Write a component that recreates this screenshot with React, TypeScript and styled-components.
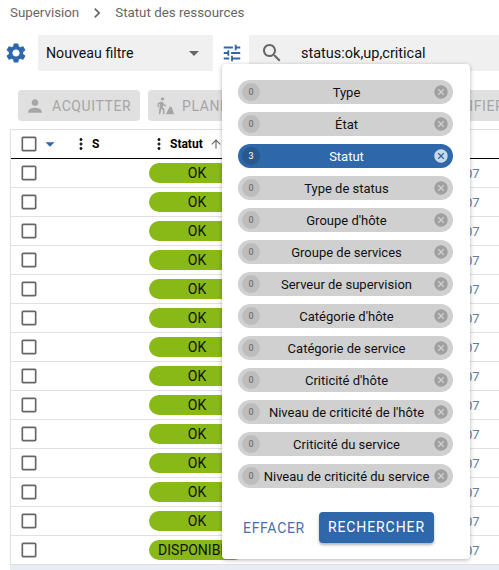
import React from 'react';
import styled, { createGlobalStyle } from 'styled-components';

const paths = {
	settings: 'M19.14 12.94c.04-.3.06-.61.06-.94 0-.32-.02-.64-.07-.94l2.03-1.58c.18-.14.23-.41.12-.61l-1.92-3.32c-.12-.22-.37-.29-.59-.22l-2.39.96c-.5-.38-1.03-.7-1.62-.94l-.36-2.54c-.04-.24-.24-.41-.48-.41h-3.84c-.24 0-.43.17-.47.41l-.36 2.54c-.59.24-1.13.57-1.62.94l-2.39-.96c-.22-.08-.47 0-.59.22L2.74 8.87c-.12.21-.08.47.12.61l2.03 1.58c-.05.3-.09.63-.09.94s.02.64.07.94l-2.03 1.58c-.18.14-.23.41-.12.61l1.92 3.32c.12.22.37.29.59.22l2.39-.96c.5.38 1.03.7 1.62.94l.36 2.54c.05.24.24.41.48.41h3.84c.24 0 .44-.17.47-.41l.36-2.54c.59-.24 1.13-.56 1.62-.94l2.39.96c.22.08.47 0 .59-.22l1.92-3.32c.12-.22.07-.47-.12-.61l-2.01-1.58zM12 15.6c-1.98 0-3.6-1.62-3.6-3.6s1.62-3.6 3.6-3.6 3.6 1.62 3.6 3.6-1.62 3.6-3.6 3.6z',
	tune: 'M3 17v2h6v-2H3zM3 5v2h10V5H3zm10 16v-2h8v-2h-8v-2h-2v6h2zM7 9v2H3v2h4v2h2V9H7zm14 4v-2H11v2h10zm-6-4h2V7h4V5h-4V3h-2v6z',
	search: 'M15.5 14h-.79l-.28-.27C15.41 12.59 16 11.11 16 9.5 16 5.91 13.09 3 9.5 3S3 5.91 3 9.5 5.91 16 9.5 16c1.61 0 3.09-.59 4.23-1.57l.27.28v.79l5 4.99L20.49 19l-4.99-5zm-6 0C7.01 14 5 11.99 5 9.5S7.01 5 9.5 5 14 7.01 14 9.5 11.99 14 9.5 14z',
	person: 'M12 12c2.21 0 4-1.79 4-4s-1.79-4-4-4-4 1.79-4 4 1.79 4 4 4zm0 2c-2.67 0-8 1.34-8 4v2h16v-2c0-2.66-5.33-4-8-4z',
	cancel: 'M12 2C6.47 2 2 6.47 2 12s4.47 10 10 10 10-4.47 10-10S17.53 2 12 2zm5 13.59L15.59 17 12 13.41 8.41 17 7 15.59 10.59 12 7 8.41 8.41 7 12 10.59 15.59 7 17 8.41 13.41 12 17 15.59z',
	arrowUp: 'M4 12l1.41 1.41L11 7.83V20h2V7.83l5.58 5.59L20 12l-8-8-8 8z',
	moreVert: 'M12 8c1.1 0 2-.9 2-2s-.9-2-2-2-2 .9-2 2 .9 2 2 2zm0 2c-1.1 0-2 .9-2 2s.9 2 2 2 2-.9 2-2-.9-2-2-2zm0 6c-1.1 0-2 .9-2 2s.9 2 2 2 2-.9 2-2-.9-2-2-2z',
	checkbox: 'M19 5v14H5V5h14m0-2H5c-1.1 0-2 .9-2 2v14c0 1.1.9 2 2 2h14c1.1 0 2-.9 2-2V5c0-1.1-.9-2-2-2z',
	chevron: 'M10 6L8.59 7.41 13.17 12l-4.58 4.59L10 18l6-6z',
	caret: 'M7 10l5 5 5-5z',
	worker: 'M9 5.5c1.1 0 2-.9 2-2s-.9-2-2-2-2 .9-2 2 .9 2 2 2zM6.5 7L3 9v4.5h1.6v-3.4l1.4-.7L4.5 22h1.9l1.3-7 1.8 1.9V22h1.8v-6.5l-1.9-2 .5-2.6c.8 1 2 1.6 3.3 1.6v-1.7c-1.1 0-2-.6-2.5-1.4l-.9-1.5C9 7.3 8.4 7 7.8 7h-1.3zM17.5 13L13 22h10l-3-9h-2.5z'
};

const GlobalStyle = createGlobalStyle`
	html, body {
		margin: 0;
		overflow: hidden;
		background: #fff;
		font-family: Roboto, "Liberation Sans", sans-serif;
	}
`;

const Page = styled.div`
	position: relative;
	width: 499px;
	height: 570px;
	overflow: hidden;
`;

const Breadcrumb = styled.nav`
	display: flex;
	align-items: center;
	height: 25px;
	padding-left: 10px;
	font-size: 13.33px;
	color: #666;
`;

const Crumb = styled.span``;

const CrumbSeparator = styled.svg`
	width: 20px;
	height: 20px;
	margin: 0 8px;
	fill: #666;
`;

const FilterBar = styled.div`
	display: flex;
	align-items: center;
	height: 36px;
	margin-top: 10px;
	padding-left: 4px;
`;

const GearIcon = styled.svg`
	width: 24px;
	height: 24px;
	margin-right: 10px;
	fill: #2e68aa;
	flex: none;
`;

const FilterSelect = styled.div`
	display: flex;
	align-items: center;
	justify-content: space-between;
	width: 175px;
	height: 36px;
	padding: 0 7px 0 8px;
	box-sizing: border-box;
	background: #f0f0f0;
	font-size: 14.2px;
	color: #111;
	flex: none;
`;

const CaretIcon = styled.svg`
	width: 24px;
	height: 24px;
	fill: #666;
`;

const TuneIcon = styled.svg`
	width: 22px;
	height: 22px;
	margin: 0 4px 0 8px;
	fill: #2e68aa;
	flex: none;
`;

const SearchBox = styled.div`
	display: flex;
	align-items: center;
	width: 260px;
	height: 36px;
	margin-left: 2px;
	padding-left: 11px;
	box-sizing: border-box;
	background: #f0f0f0;
	font-size: 14.5px;
	color: #111;
	flex: none;
`;

const SearchIcon = styled.svg`
	width: 24px;
	height: 24px;
	margin-right: 17px;
	fill: #666;
	flex: none;
`;

const ActionBar = styled.div`
	display: flex;
	gap: 8px;
	height: 31px;
	margin-top: 19px;
	padding-left: 18px;
`;

const ActionButton = styled.div<{ $width: number; $inset?: number }>`
	display: flex;
	align-items: center;
	gap: 7px;
	width: ${(p) => p.$width}px;
	height: 31px;
	padding-left: ${(p) => p.$inset ?? 7}px;
	box-sizing: border-box;
	border-radius: 4px;
	background: #e0e0e0;
	color: #a6a6a6;
	font-size: 14px;
	letter-spacing: 0.6px;
	white-space: nowrap;
	overflow: hidden;
	flex: none;
`;

const ActionIcon = styled.svg`
	width: 20px;
	height: 20px;
	fill: #a6a6a6;
	flex: none;
`;

const Table = styled.div`
	width: 520px;
	margin: 8px 0 0 10px;
	border-left: 1px solid #e0e0e0;
	border-top: 1px solid #e0e0e0;
`;

const HeaderRow = styled.div`
	display: grid;
	grid-template-columns: 68px 78px 1fr;
	align-items: center;
	height: 28px;
	border-bottom: 1px solid #000;
	font-size: 12px;
	font-weight: 700;
	color: #000;
`;

const BodyRow = styled.div`
	display: grid;
	grid-template-columns: 138px 96px 1fr;
	align-items: center;
	height: 28px;
	border-bottom: 1px solid #e0e0e0;
`;

const SelectCell = styled.div`
	display: flex;
	align-items: center;
	padding-left: 8px;
`;

const HeaderCell = styled.div`
	display: flex;
	align-items: center;
`;

const CheckIcon = styled.svg`
	width: 20px;
	height: 20px;
	fill: #666;
	flex: none;
`;

const SortCaret = styled.svg`
	width: 22px;
	height: 22px;
	fill: #2e68aa;
`;

const DotsIcon = styled.svg`
	width: 18px;
	height: 18px;
	margin-left: -7px;
	margin-right: 2px;
	fill: #222;
	flex: none;
`;

const SortArrow = styled.svg`
	width: 14px;
	height: 14px;
	margin-left: 6px;
	fill: #666;
`;

const StatusPill = styled.div`
	height: 20px;
	line-height: 20px;
	border-radius: 10px;
	background: #88b917;
	color: #111;
	font-size: 14px;
	text-align: center;
	white-space: nowrap;
	overflow: hidden;
`;

const DateCell = styled.div`
	padding-left: 220px;
	font-size: 13px;
	color: #607d9b;
`;

const BottomBand = styled.div`
	height: 6px;
	margin-left: 10px;
	background: #e8edf4;
`;

const Popover = styled.div`
	position: absolute;
	left: 222px;
	top: 64px;
	width: 248px;
	height: 495px;
	padding: 16px;
	box-sizing: border-box;
	display: flex;
	flex-direction: column;
	background: #fff;
	border-radius: 4px;
	box-shadow: 0 1px 4px rgba(0, 0, 0, 0.3);
`;

const ChipList = styled.div`
	display: flex;
	flex-direction: column;
	gap: 8px;
	width: 215px;
`;

const Chip = styled.div<{ $active?: boolean }>`
	display: flex;
	align-items: center;
	height: 24px;
	padding: 0 4px;
	box-sizing: border-box;
	border-radius: 12px;
	background: ${(p) => (p.$active ? '#2e68aa' : '#d0d0d0')};
	color: ${(p) => (p.$active ? '#fff' : '#111')};
	font-size: 13px;
`;

const ChipCount = styled.span<{ $active?: boolean }>`
	display: flex;
	align-items: center;
	justify-content: center;
	width: 18px;
	height: 18px;
	border-radius: 50%;
	background: ${(p) => (p.$active ? '#27598f' : '#bdbdbd')};
	color: ${(p) => (p.$active ? '#fff' : '#616161')};
	font-size: 9px;
	flex: none;
`;

const ChipLabel = styled.span`
	flex: 1;
	text-align: center;
	white-space: nowrap;
`;

const ChipClose = styled.svg<{ $active?: boolean }>`
	width: 16px;
	height: 16px;
	fill: ${(p) => (p.$active ? 'rgba(255, 255, 255, 0.75)' : '#a0a0a0')};
	flex: none;
`;

const PopoverActions = styled.div`
	display: flex;
	align-items: center;
	gap: 14px;
	margin-top: 24px;
	padding-left: 5px;
	font-size: 14px;
	letter-spacing: 0.7px;
`;

const ClearButton = styled.span`
	color: #4a6fa8;
`;

const SubmitButton = styled.div`
	width: 115px;
	height: 31px;
	line-height: 31px;
	text-align: center;
	border-radius: 4px;
	background: #2e68aa;
	color: #fff;
	letter-spacing: 0.9px;
	box-shadow: 0 2px 3px rgba(0, 0, 0, 0.3);
`;

const criteria = [
	'Type',
	'État',
	'Statut',
	'Type de status',
	"Groupe d'hôte",
	'Groupe de services',
	'Serveur de supervision',
	"Catégorie d'hôte",
	'Catégorie de service',
	"Criticité d'hôte",
	"Niveau de criticité de l'hôte",
	'Criticité du service',
	'Niveau de criticité du service'
];

const rows = [...Array(13).fill('OK'), 'DISPONIBLE'];

const App = () => (
	<Page>
		<GlobalStyle />
		<Breadcrumb>
			<Crumb>Supervision</Crumb>
			<CrumbSeparator viewBox='0 0 24 24'><path d={paths.chevron} /></CrumbSeparator>
			<Crumb>Statut des ressources</Crumb>
		</Breadcrumb>
		<FilterBar>
			<GearIcon viewBox='0 0 24 24'><path d={paths.settings} /></GearIcon>
			<FilterSelect>
				Nouveau filtre
				<CaretIcon viewBox='0 0 24 24'><path d={paths.caret} /></CaretIcon>
			</FilterSelect>
			<TuneIcon viewBox='0 0 24 24'><path d={paths.tune} /></TuneIcon>
			<SearchBox>
				<SearchIcon viewBox='0 0 24 24'><path d={paths.search} /></SearchIcon>
				status:ok,up,critical
			</SearchBox>
		</FilterBar>
		<ActionBar>
			<ActionButton $width={122}>
				<ActionIcon viewBox='0 0 24 24'><path d={paths.person} /></ActionIcon>
				ACQUITTER
			</ActionButton>
			<ActionButton $width={130}>
				<ActionIcon viewBox='0 0 24 24'><path d={paths.worker} /></ActionIcon>
				PLANIFIER
			</ActionButton>
			<ActionButton $width={240} $inset={156}>VÉRIFIER</ActionButton>
		</ActionBar>
		<Table>
			<HeaderRow>
				<SelectCell>
					<CheckIcon viewBox='0 0 24 24'><path d={paths.checkbox} /></CheckIcon>
					<SortCaret viewBox='0 0 24 24'><path d={paths.caret} /></SortCaret>
				</SelectCell>
				<HeaderCell>
					<DotsIcon viewBox='0 0 24 24'><path d={paths.moreVert} /></DotsIcon>
					S
				</HeaderCell>
				<HeaderCell>
					<DotsIcon viewBox='0 0 24 24'><path d={paths.moreVert} /></DotsIcon>
					Statut
					<SortArrow viewBox='0 0 24 24'><path d={paths.arrowUp} /></SortArrow>
				</HeaderCell>
			</HeaderRow>
			{rows.map((status, i) => (
				<BodyRow key={i}>
					<SelectCell>
						<CheckIcon viewBox='0 0 24 24'><path d={paths.checkbox} /></CheckIcon>
					</SelectCell>
					<StatusPill>{status}</StatusPill>
					<DateCell>07</DateCell>
				</BodyRow>
			))}
		</Table>
		<BottomBand />
		<Popover>
			<ChipList>
				{criteria.map((label) => {
					const active = label === 'Statut';
					return (
						<Chip key={label} $active={active}>
							<ChipCount $active={active}>{active ? 3 : 0}</ChipCount>
							<ChipLabel>{label}</ChipLabel>
							<ChipClose $active={active} viewBox='0 0 24 24'><path d={paths.cancel} /></ChipClose>
						</Chip>
					);
				})}
			</ChipList>
			<PopoverActions>
				<ClearButton>EFFACER</ClearButton>
				<SubmitButton>RECHERCHER</SubmitButton>
			</PopoverActions>
		</Popover>
	</Page>
);

export default App;
